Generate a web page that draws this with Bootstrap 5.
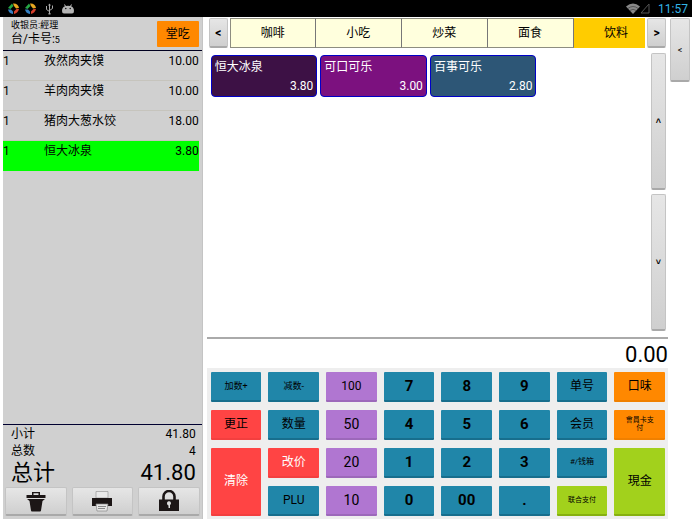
<!DOCTYPE html>
<html lang="zh-CN">
<head>
<meta charset="utf-8">
<meta name="viewport" content="width=device-width, initial-scale=1">
<title>收银台</title>
<link rel="stylesheet" href="https://cdn.jsdelivr.net/npm/bootstrap@5.3.0/dist/css/bootstrap.min.css">
<style>
body{font-family:Roboto,"Noto Sans CJK SC",sans-serif;font-size:12px;line-height:16px;color:#000;background:#fff}
button{font-family:inherit;color:#000;border:0;padding:0}
.status{height:17px;background:#000;padding:0 4px 0 7px}
.clock{color:#33b5e5}
.ticket{flex:0 0 29.3%;padding-left:3px}
.ticket-in{background:#d0d0d0;border-right:1px solid #c4c4c4}
.ticket-head{height:34px;padding:0 3px 0 8px;border-bottom:1px solid #000020}
.t9{font-size:9px}
.who{line-height:12px}
.dine{width:42px;height:26px;background:#ff8800;border-radius:1px}
.orders{width:calc(100% - 3px);border-collapse:separate;border-spacing:0}
.orders td{height:30px;padding:2px 0 0;vertical-align:top;border-bottom:1px solid #c6c4bd}
.orders td:first-child{width:41px}
.orders .picked td{background:#00ff00;border:0}
.sums{border-top:1px solid #000030;padding:1px 6px 0 8px}
.sums dl div{line-height:17px}
.sums dl .grand{font-size:22px;line-height:26px}
.sums dt{font-weight:400}
.acts{gap:5px;padding:1px 2px 3px}
.soft{background:linear-gradient(#e6e6e6,#cfcfcf);border:1px solid #c4c4c4;border-bottom:2px solid #a9a9a9;border-radius:2px}
.acts .soft{height:29px}
.side{flex:0 0 24px;padding:1px 2px}
.side .soft{width:20px;height:64px;font-size:9px}
.desk{margin-left:4px}
.tabs-row{padding:1px 2px 0 2px;gap:2px}
.arrow{flex:0 0 19px;height:30px;font-weight:700}
.cat{flex:0 0 20.7%;height:30px;background:#ffffdd;border:1px solid #8d8d80;border-left-width:0;border-right-color:#777}
.cat:first-child{border-left-width:1px}
.cat.on{background:#ffcc00;border-color:#ffcc00}
.goods{padding:5px 2px 6px 4px;gap:5px}
.tiles{display:grid;grid-template-columns:repeat(4,1fr);gap:3px;align-content:start;padding-top:2px}
.tile{height:42px;color:#fff;border:1px solid #0000c8;border-radius:4px;padding:3px 3px 2px}
.c1{background:#3d1145}.c2{background:#7c117f}.c3{background:#2d5676}
.scrolls{flex:0 0 15px;gap:4px}
.scrolls .soft{font-size:9px;font-weight:700}
.amount{border-top:2px solid #aaa;height:31px;font-size:22px;line-height:31px}
.pad{display:grid;grid-template-columns:repeat(8,1fr);grid-auto-rows:30px;gap:8px 7px;background:#eee;padding:4px 3px 3px 4px}
.key{background:#2086a9;border-bottom:2px solid #176e8d;border-radius:1px}
.num{font-size:15px;font-weight:700}
.cash{background:#b076d1;border-color:#9c68ba;font-size:14px}
.red{background:#ff4444;border-color:#f33f3f}
.org{background:#ff8800;border-color:#f08000}
.grn{background:#a2d11c;border-color:#86b010}
.tall{grid-row:span 2}
.t12{font-size:12px}.t8{font-size:8px}.t7{font-size:7px;line-height:8px}
</style>
<script src="https://cdn.jsdelivr.net/npm/bootstrap@5.3.0/dist/js/bootstrap.bundle.min.js"></script>
</head>
<body class="d-flex flex-column min-vh-100">
<header class="status d-flex align-items-center justify-content-between">
  <div class="d-flex align-items-center">
    <svg class="me-1" width="13" height="13" viewBox="0 0 13 13"><path d="M1 6L5 1.500 6.500 4 3.500 7z" fill="#27a746"/><path d="M6 1.500q5-.5 6 4.500L9 6.500 7 4z" fill="#e9a820"/><path d="M12 7q-1 4-5 5L7 9.500 9.500 7z" fill="#d8402c"/><path d="M1 7.500q1 4 5 4.500V9.500L4 7.500z" fill="#3480c4"/></svg>
    <svg width="13" height="13" viewBox="0 0 13 13"><path d="M1 6L5 1.500 6.500 4 3.500 7z" fill="#27a746"/><path d="M6 1.500q5-.5 6 4.500L9 6.500 7 4z" fill="#e9a820"/><path d="M12 7q-1 4-5 5L7 9.500 9.500 7z" fill="#d8402c"/><path d="M1 7.500q1 4 5 4.500V9.500L4 7.500z" fill="#3480c4"/></svg>
    <svg class="ms-2" width="9" height="12" viewBox="0 0 9 12" fill="none" stroke="#aaa"><path d="M4.500 1v10M1.500 4v2.500l3 2M7.500 3v2.500l-3 2"/><path d="M3 2.500L4.500.5 6 2.500zM3.500 10h2v1.500h-2zM1 3h1v1H1zM7 2.500h1v1H7z" fill="#aaa" stroke="none"/></svg>
    <svg class="ms-2" width="12" height="10" viewBox="0 0 12 10"><path d="M0 7C0 4 1.500 2.700 3 2.200L2 .8l.7-.5L4 1.900q2-.4 4 0L9.300.3l.7.5L9 2.200C10.500 2.700 12 4 12 7q0 2.500-2 2.500H2Q0 9.500 0 7z" fill="#b4b4b4"/><circle cx="3.800" cy="4.500" r=".7"/><circle cx="8.200" cy="4.500" r=".7"/></svg>
  </div>
  <div class="d-flex align-items-center">
    <svg width="14" height="11" viewBox="0 0 14 11"><path d="M0 3.500Q7-2.500 14 3.500L7 11z" fill="#888"/><path d="M1.800 5.500q5.200-4 10.400 0M3.800 7.500q3.200-2.500 6.400 0" fill="none" stroke="#333" stroke-width=".6"/></svg>
    <svg width="10" height="11" viewBox="0 0 10 11" fill="none" stroke="#555"><path d="M1 10L9 1v9z"/></svg>
    <span class="clock ms-2">11:57</span>
  </div>
</header>
<main class="d-flex flex-grow-1">
  <aside class="ticket d-flex">
    <div class="ticket-in d-flex flex-column flex-grow-1">
      <div class="ticket-head d-flex justify-content-between align-items-center">
        <div><div class="t9 who">收银员:經理</div><div>台/卡号:<span class="t9">5</span></div></div>
        <button class="dine">堂吃</button>
      </div>
      <table class="orders">
        <tr><td>1</td><td>孜然肉夹馍</td><td class="text-end">10.00</td></tr>
        <tr><td>1</td><td>羊肉肉夹馍</td><td class="text-end">10.00</td></tr>
        <tr><td>1</td><td>猪肉大葱水饺</td><td class="text-end">18.00</td></tr>
        <tr class="picked"><td>1</td><td>恒大冰泉</td><td class="text-end">3.80</td></tr>
      </table>
      <div class="sums mt-auto">
        <dl class="m-0">
          <div class="d-flex justify-content-between"><dt>小计</dt><dd class="m-0">41.80</dd></div>
          <div class="d-flex justify-content-between"><dt>总数</dt><dd class="m-0">4</dd></div>
          <div class="d-flex justify-content-between grand"><dt>总计</dt><dd class="m-0">41.80</dd></div>
        </dl>
      </div>
      <div class="acts d-flex">
        <button class="soft flex-fill" aria-label="删除"><svg width="22" height="21" viewBox="0 0 22 21" fill="#1c1616"><path d="M7 4V1h8v3h5.500v3h-19V4zM8.500 4h5V2.300h-5zM2 8h18l-2.500 2L16 19.500q0 1-1 1H7q-1 0-1-1L4.500 10z"/></svg></button>
        <button class="soft flex-fill" aria-label="打印"><svg width="22" height="21" viewBox="0 0 22 21"><path d="M5 .5h12V7H5z" fill="#e9e9e9" stroke="#999" stroke-width=".7"/><path d="M1 7h20v8H1z" fill="#1c1616"/><path d="M5 13h12l-1 7H6z" fill="#e6e6e6" stroke="#888" stroke-width=".7"/><path d="M7 15.500h8M7 17.500h7" stroke="#888"/></svg></button>
        <button class="soft flex-fill" aria-label="锁定"><svg width="22" height="22" viewBox="0 0 22 22"><path d="M5.500 10V6.500a5.500 5.500 0 0 1 11 0V10" fill="none" stroke="#1c1616" stroke-width="2.600"/><path d="M1 9.500h20V21H1z" fill="#1c1616"/><path d="M9 13.500a2 2 0 1 1 3 1.500V18h-1.500v-2.500Q9 15 9 13.500z" fill="#ddd"/></svg></button>
      </div>
    </div>
  </aside>
  <section class="desk d-flex flex-column flex-grow-1">
    <nav class="tabs-row d-flex" aria-label="分类">
      <button class="soft arrow">&lt;</button>
      <div class="d-flex flex-grow-1 overflow-hidden">
        <button class="cat">咖啡</button><button class="cat">小吃</button><button class="cat">炒菜</button><button class="cat">面食</button><button class="cat on">饮料</button>
      </div>
      <button class="soft arrow">&gt;</button>
    </nav>
    <div class="goods d-flex flex-grow-1">
      <div class="tiles flex-grow-1">
        <button class="tile c1 d-flex flex-column justify-content-between"><span class="align-self-start">恒大冰泉</span><span class="align-self-end">3.80</span></button>
        <button class="tile c2 d-flex flex-column justify-content-between"><span class="align-self-start">可口可乐</span><span class="align-self-end">3.00</span></button>
        <button class="tile c3 d-flex flex-column justify-content-between"><span class="align-self-start">百事可乐</span><span class="align-self-end">2.80</span></button>
      </div>
      <div class="scrolls d-flex flex-column">
        <button class="soft flex-fill">˄</button>
        <button class="soft flex-fill">˅</button>
      </div>
    </div>
    <div class="amount text-end">0.00</div>
    <div class="pad">
      <button class="key t9">加数+</button><button class="key t9">减数-</button><button class="key cash t12">100</button><button class="key num">7</button><button class="key num">8</button><button class="key num">9</button><button class="key">单号</button><button class="key org">口味</button>
      <button class="key red">更正</button><button class="key">数量</button><button class="key cash">50</button><button class="key num">4</button><button class="key num">5</button><button class="key num">6</button><button class="key">会员</button><button class="key org t7">會員卡支<br>付</button>
      <button class="key red tall text-white">清除</button><button class="key red text-white">改价</button><button class="key cash">20</button><button class="key num">1</button><button class="key num">2</button><button class="key num">3</button><button class="key t8">#/钱箱</button><button class="key grn tall">現金</button>
      <button class="key">PLU</button><button class="key cash">10</button><button class="key num">0</button><button class="key num">00</button><button class="key num">.</button><button class="key grn t7">联合支付</button>
    </div>
  </section>
  <div class="side"><button class="soft">&lt;</button></div>
</main>
</body>
</html>
